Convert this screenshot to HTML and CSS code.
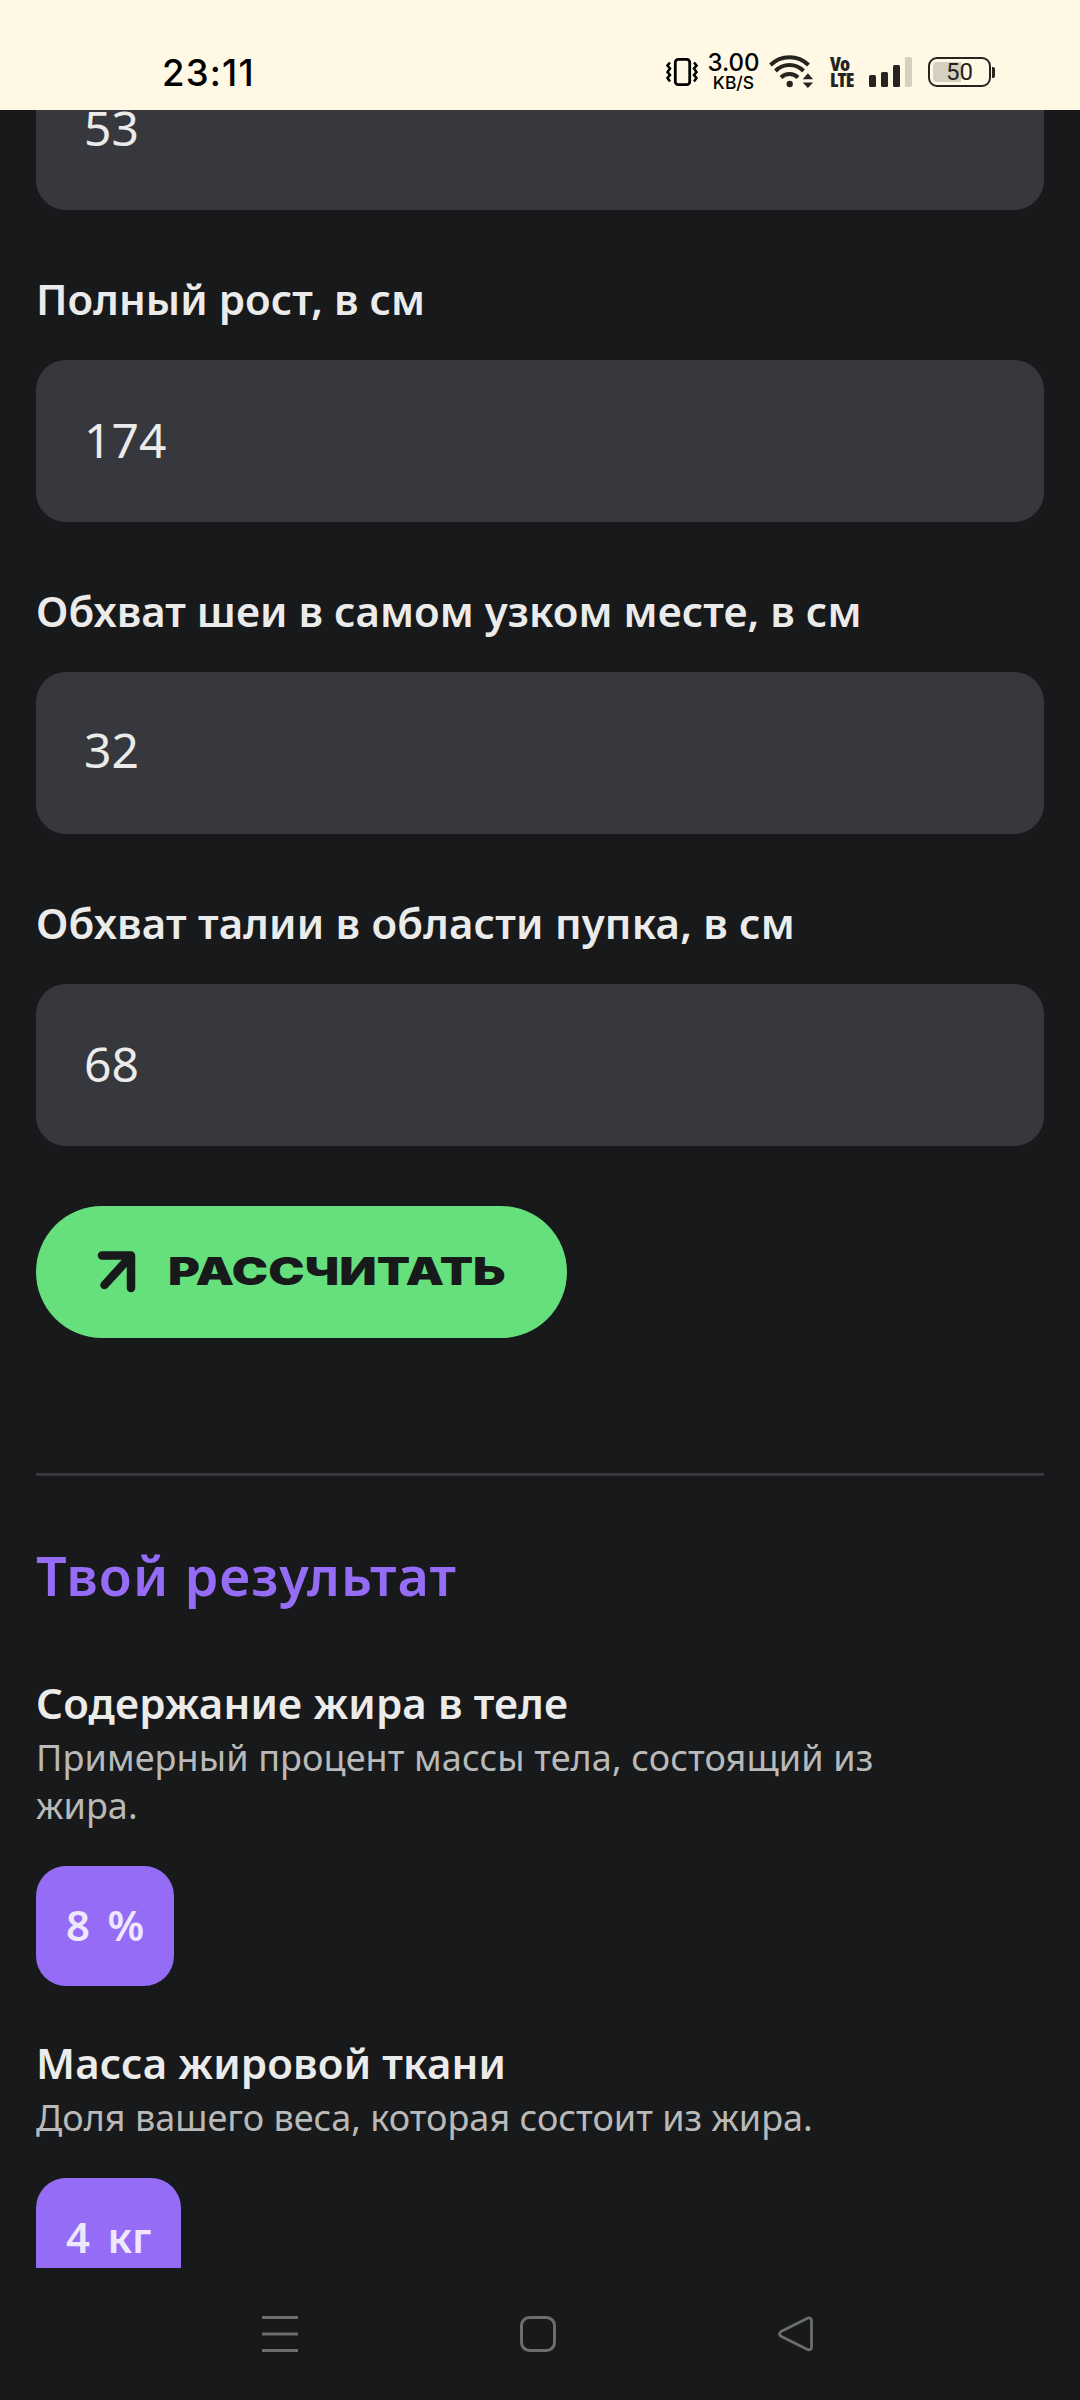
FILE: index.html
```html
<!DOCTYPE html>
<html lang="ru">
<head>
<meta charset="utf-8">
<title>Калькулятор</title>
<link rel="stylesheet" href="styles.css">
</head>
<body>
<header class="status">
  <div class="clock">23:11</div>
  <div class="indicators">
    <svg class="vibrate" width="32" height="30" viewBox="0 0 32 30" fill="none" stroke="#000">
      <rect x="9.300" y="2.300" width="14.400" height="25.400" rx="3" stroke-width="2.800"/>
      <path d="M4.500 5.500l-2.500 3 2.500 3-2.500 3.500 2.500 3-2.500 3 2.500 3.500M28.500 5.500l2.500 3-2.500 3 2.500 3.500-2.500 3 2.500 3-2.500 3.500" transform="translate(-.5 0)" stroke-width="2.500"/>
    </svg>
    <div class="speed"><span class="speed-value">3.00</span><span class="speed-unit">KB/S</span></div>
    <svg class="wifi" width="45" height="36" viewBox="0 0 45 36" fill="none" stroke="#26241f" stroke-width="4">
      <path d="M1.500 12a27 27 0 0 1 38 0M6.500 18a19.500 19.500 0 0 1 28 0M12 24.500a12 12 0 0 1 17 0"/>
      <circle cx="20.700" cy="31" r="3.200" fill="#26241f" stroke="none"/>
      <path d="M33.700 26.300l5.200-6 5.200 6zM33.700 29.500l5.200 5.500 5.200-5.500z" fill="#26241f" stroke="none"/>
    </svg>
    <div class="volte"><span>Vo</span><span>LTE</span></div>
    <svg class="signal" width="43" height="30" viewBox="0 0 43 30" fill="#26241f">
      <rect x="0" y="18" width="7" height="12" rx="1.500"/><rect x="12" y="15" width="7" height="15" rx="1.500"/>
      <rect x="24" y="8" width="7" height="22" rx="1.500"/><rect x="36" y="0" width="7" height="30" rx="1.500" fill="#d4cfbe"/>
    </svg>
    <div class="battery"><div class="battery-body"><span>50</span></div><div class="battery-tip"></div></div>
  </div>
</header>
<main class="page">
  <div class="input input-first">53</div>
  <div class="field"><label class="label">Полный рост, в см</label><div class="input">174</div></div>
  <div class="field"><label class="label">Обхват шеи в самом узком месте, в см</label><div class="input input-raised">32</div></div>
  <div class="field"><label class="label label-loose">Обхват талии в области пупка, в см</label><div class="input">68</div></div>
  <button class="submit">
    <svg width="40" height="42" viewBox="0 0 40 42" fill="none" stroke="#17191a" stroke-width="8.500" stroke-linecap="round" stroke-linejoin="round"><path d="M5 4.500H34V37M33 6L7.500 34"/></svg>
    <span class="submit-text">РАССЧИТАТЬ</span>
  </button>
  <hr class="divider">
  <h2 class="title">Твой результат</h2>
  <section class="result">
    <h3 class="result-name">Содержание жира в теле</h3>
    <p class="result-note result-note-loose">Примерный процент массы тела, состоящий из жира.</p>
    <div class="chip"><span>8</span><span>%</span></div>
  </section>
  <section class="result">
    <h3 class="result-name">Масса жировой ткани</h3>
    <p class="result-note">Доля вашего веса, которая состоит из жира.</p>
    <div class="chip"><span>4</span><span>кг</span></div>
  </section>
</main>
<nav class="navbar">
  <svg width="36" height="36" viewBox="0 0 36 36" stroke="#6b6d6e" stroke-width="3"><path d="M0 1.500h36M0 18h36M0 34.500h36"/></svg>
  <svg width="36" height="36" viewBox="0 0 36 36" fill="none" stroke="#6b6d6e" stroke-width="3"><rect x="1.500" y="1.500" width="33" height="33" rx="8"/></svg>
  <svg width="36" height="36" viewBox="0 0 36 36" fill="none" stroke="#6b6d6e" stroke-width="2.800"><path d="M3 15.500L29.500 2.200Q33.500 1 33.500 5V31Q33.500 34.800 29.500 33.400L3 20.300Q0 18 3 15.500Z"/></svg>
</nav>
</body>
</html>
```
FILE: styles.css
```css
* { box-sizing: border-box; }
body {
  margin: 0;
  width: 1080px;
  height: 2400px;
  overflow: hidden;
  display: flex;
  flex-direction: column;
  background: #17191a;
  color: #ebebeb;
  font-family: "Noto Sans", sans-serif;
}
.status {
  flex: none;
  height: 110px;
  padding: 0 85px 0 162px;
  display: flex;
  justify-content: space-between;
  background: #fff8e5;
  color: #000;
}
.clock {
  margin-top: 35px;
  font: 500 36.5px/76px Inter, sans-serif;
  letter-spacing: 1.2px;
}
.indicators { display: flex; align-items: flex-start; }
.vibrate { margin-top: 57px; }
.speed {
  width: 51px;
  margin: 51px 0 0 10px;
  display: flex;
  flex-direction: column;
  align-items: center;
  font-family: Inter, sans-serif;
  font-weight: 500;
}
.speed-value { font-size: 24px; line-height: 24px; }
.speed-unit { margin-top: -1px; font-size: 17.5px; line-height: 18px; }
.wifi { margin: 53px 0 0 10px; }
.volte {
  width: 22px;
  margin: 56px 0 0 16px;
  display: flex;
  flex-direction: column;
  font: 800 19.5px/15.5px "Open Sans", sans-serif;
  font-stretch: 75%;
  letter-spacing: -0.8px;
  color: #26241f;
}
.signal { margin: 57px 0 0 17px; }
.battery {
  margin: 57px 0 0 16px;
  display: flex;
  align-items: center;
  gap: 1px;
}
.battery-body {
  width: 63px;
  height: 30px;
  padding: 3px;
  border: 2px solid #26241f;
  border-radius: 9px;
  display: flex;
  align-items: center;
  justify-content: center;
  font: 400 24px/24px Roboto, sans-serif;
  color: #26241f;
  background: linear-gradient(90deg, #d4cfbe 52%, transparent 52%) content-box;
}
.battery-tip {
  width: 3px;
  height: 11px;
  border-radius: 0 2px 2px 0;
  background: #26241f;
}
.page {
  flex: none;
  height: 2158px;
  padding: 0 36px;
  overflow: hidden;
  display: flex;
  flex-direction: column;
  align-items: flex-start;
}
.field { width: 100%; margin-bottom: 60px; }
.label {
  display: block;
  height: 66px;
  margin-bottom: 24px;
  font-size: 42px;
  font-weight: 600;
  line-height: 58px;
  letter-spacing: 0.04px;
}
.label-loose { letter-spacing: 0.2px; }
.input {
  width: 100%;
  height: 162px;
  padding: 0 48px;
  border-radius: 30px;
  background: #37383d;
  font-size: 48px;
  line-height: 159px;
}
.input-first {
  flex: none;
  height: 100px;
  margin-bottom: 60px;
  border-radius: 0 0 30px 30px;
  line-height: 35px;
}
.input-raised { line-height: 155px; }
.submit {
  flex: none;
  width: 531px;
  height: 132px;
  padding: 0 0 0 61px;
  border: 0;
  border-radius: 66px;
  display: flex;
  align-items: center;
  background: #66df7d;
  color: #17191a;
}
.submit-text {
  margin: -2px 0 0 31px;
  font: 900 38px/60px Inter, sans-serif;
  white-space: nowrap;
  transform: scaleX(1.28);
  transform-origin: left center;
}
.divider {
  flex: none;
  width: 100%;
  height: 3px;
  margin: 135px 0 0;
  border: 0;
  background: #37383d;
}
.title {
  margin: 63px 0 0;
  font-size: 54px;
  font-weight: 600;
  line-height: 72px;
  letter-spacing: 1.1px;
  color: #946cf5;
}
.result { margin-top: 62px; }
.result + .result { margin-top: 47px; }
.result-name {
  margin: 0;
  font-size: 42px;
  font-weight: 600;
  line-height: 60px;
  letter-spacing: 0.17px;
}
.result-note {
  width: 900px;
  margin: 1px 0 36px;
  font-size: 36px;
  line-height: 48px;
  color: #b9b9b9;
}
.result-note-loose { letter-spacing: 0.1px; }
.chip {
  width: max-content;
  height: 120px;
  padding: 0 29.5px 0 30px;
  display: flex;
  gap: 17.5px;
  border-radius: 30px;
  background: #946cf5;
  color: #eee7fd;
  font-size: 42px;
  font-weight: 600;
  line-height: 118px;
}
.navbar {
  flex: none;
  height: 132px;
  padding: 48px 266px 0 262px;
  display: flex;
  justify-content: space-between;
}
```
